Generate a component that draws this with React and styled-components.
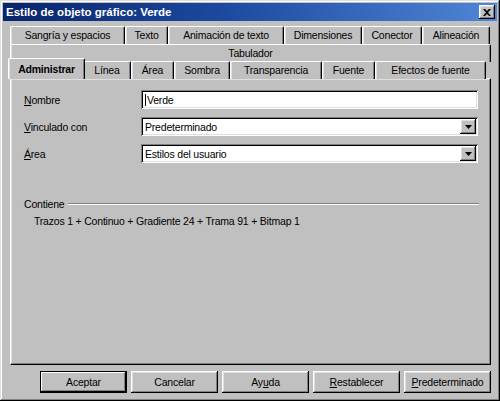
import styled, { createGlobalStyle } from 'styled-components';

const GlobalStyle = createGlobalStyle`
  html, body {
    margin: 0;
    padding: 0;
    background: #c0c0c0;
  }
  * {
    box-sizing: border-box;
  }
`;

const raised = `
  box-shadow: inset -1px -1px #000, inset 1px 1px #fff, inset -2px -2px #808080, inset 2px 2px #dfdfdf;
`;

const sunken = `
  box-shadow: inset 1px 1px #808080, inset -1px -1px #fff, inset 2px 2px #000, inset -2px -2px #dfdfdf;
`;

const topRow = [
  { label: 'Sangría y espacios', width: 115 },
  { label: 'Texto', width: 43 },
  { label: 'Animación de texto', width: 116 },
  { label: 'Dimensiones', width: 78 },
  { label: 'Conector', width: 60 },
  { label: 'Alineación', width: 68 },
];

const frontRow = [
  { label: 'Administrar', width: 77 },
  { label: 'Línea', width: 48 },
  { label: 'Área', width: 43 },
  { label: 'Sombra', width: 56 },
  { label: 'Transparencia', width: 92 },
  { label: 'Fuente', width: 53 },
  { label: 'Efectos de fuente', width: 111 },
];

const buttons = [
  { label: 'Aceptar', isDefault: true },
  { label: 'Cancelar' },
  { label: ['Ay', 'u', 'da'] },
  { label: ['', 'R', 'establecer'] },
  { label: ['', 'P', 'redeterminado'] },
];

const Window = styled.div`
  width: 500px;
  height: 401px;
  padding: 3px;
  display: flex;
  flex-direction: column;
  background: #c0c0c0;
  font-family: 'Liberation Sans', Arial, sans-serif;
  font-size: 10.5px;
  letter-spacing: -0.2px;
  color: #000;
  box-shadow: inset -1px -1px #000, inset 1px 1px #dfdfdf, inset -2px -2px #808080, inset 2px 2px #fff;
`;

const TitleBar = styled.div`
  height: 18px;
  display: flex;
  align-items: center;
  justify-content: space-between;
  padding: 0 2px 0 3px;
  background: linear-gradient(90deg, #08246b 0%, #1c4aa0 45%, #4f86d6 100%);
  color: #fff;
  font-weight: 700;
  font-size: 11.5px;
  letter-spacing: 0;
`;

const CloseButton = styled.div`
  width: 16px;
  height: 14px;
  display: flex;
  align-items: center;
  justify-content: center;
  background: #c0c0c0;
  ${raised}

  svg {
    display: block;
  }
`;

const Body = styled.div`
  flex: 1;
  display: flex;
  flex-direction: column;
  padding: 5px 6px 0 7px;
`;

const TabRow = styled.div`
  display: flex;
  height: ${({ $h }) => $h}px;
  position: relative;
  z-index: ${({ $z }) => $z};
`;

const Tab = styled.div`
  width: ${({ $w }) => ($w ? `${$w}px` : 'auto')};
  flex: ${({ $w }) => ($w ? '0 0 auto' : '1 1 auto')};
  height: ${({ $active }) => ($active ? 21 : 18)}px;
  margin: ${({ $active }) => ($active ? '-3px -2px 0 -2px' : '0')};
  display: flex;
  align-items: flex-start;
  justify-content: center;
  padding-top: ${({ $active }) => ($active ? 4 : 2)}px;
  background: #c0c0c0;
  border-top: 1px solid #fff;
  border-left: 1px solid #fff;
  border-right: 1px solid #000;
  border-radius: 2px 2px 0 0;
  box-shadow: inset -1px 0 #808080, inset 1px 0 #dfdfdf;
  font-weight: ${({ $active }) => ($active ? 700 : 400)};
  white-space: nowrap;
  position: relative;
  z-index: ${({ $active }) => ($active ? 3 : 1)};
`;

const Panel = styled.div`
  height: 287px;
  display: flex;
  flex-direction: column;
  padding: 11px 12px 0 12px;
  border-top: 1px solid #fff;
  border-left: 1px solid #fff;
  border-right: 1px solid #000;
  border-bottom: 1px solid #000;
  box-shadow: inset -1px -1px #808080, inset 1px 1px #dfdfdf;
  position: relative;
  z-index: 2;
`;

const FieldRow = styled.div`
  display: flex;
  align-items: center;
  height: 19px;
  margin-bottom: 8px;
`;

const Label = styled.div`
  width: 118px;
  padding-left: 1px;
`;

const Field = styled.div`
  flex: 1;
  height: 19px;
  display: flex;
  align-items: center;
  justify-content: space-between;
  padding: 2px 2px 2px 4px;
  background: #fff;
  ${sunken}
`;

const Caret = styled.span`
  display: inline-block;
  width: 1px;
  height: 12px;
  background: #000;
  margin-right: 1px;
  vertical-align: -2px;
`;

const DropButton = styled.div`
  width: 16px;
  height: 15px;
  display: flex;
  align-items: center;
  justify-content: center;
  background: #c0c0c0;
  ${raised}
`;

const Group = styled.div`
  margin-top: 27px;
  display: flex;
  align-items: center;
  gap: 4px;
  padding-left: 1px;
`;

const GroupLine = styled.div`
  flex: 1;
  height: 2px;
  border-top: 1px solid #808080;
  border-bottom: 1px solid #fff;
  margin-right: -1px;
`;

const Contents = styled.div`
  margin-top: 5px;
  padding-left: 11px;
`;

const ButtonBar = styled.div`
  display: flex;
  gap: 4px;
  padding: 6px 0 0 30px;
`;

const Button = styled.div`
  width: 87px;
  height: 22px;
  display: flex;
  align-items: center;
  justify-content: center;
  background: #c0c0c0;
  box-shadow: ${({ $default }) =>
    $default
      ? 'inset 0 0 0 1px #000, inset -2px -2px #000, inset 2px 2px #fff, inset -3px -3px #808080'
      : 'inset -1px -1px #000, inset 1px 1px #fff, inset -2px -2px #808080, inset 2px 2px #dfdfdf'};
`;

const Arrow = () => (
  <svg width="7" height="4" viewBox="0 0 7 4">
    <path d="M0 0h7L3.5 4z" fill="#000" />
  </svg>
);

export default function App() {
  return (
    <>
      <GlobalStyle />
      <Window>
        <TitleBar>
          <span>Estilo de objeto gráfico: Verde</span>
          <CloseButton>
            <svg width="8" height="7" viewBox="0 0 8 7">
              <path d="M0 0h2l2 2 2-2h2L5 3.5 8 7H6L4 5 2 7H0l3-3.5z" fill="#000" />
            </svg>
          </CloseButton>
        </TitleBar>
        <Body>
          <TabRow $h={18} $z={1}>
            {topRow.map((t) => (
              <Tab key={t.label} $w={t.width}>{t.label}</Tab>
            ))}
          </TabRow>
          <TabRow $h={17} $z={2}>
            <Tab>Tabulador</Tab>
          </TabRow>
          <TabRow $h={17} $z={3}>
            {frontRow.map((t, i) => (
              <Tab key={t.label} $w={t.width} $active={i === 0}>{t.label}</Tab>
            ))}
          </TabRow>
          <Panel>
            <FieldRow>
              <Label><u>N</u>ombre</Label>
              <Field><span><Caret />Verde</span></Field>
            </FieldRow>
            <FieldRow>
              <Label><u>V</u>inculado con</Label>
              <Field>
                <span>Predeterminado</span>
                <DropButton><Arrow /></DropButton>
              </Field>
            </FieldRow>
            <FieldRow>
              <Label><u>Á</u>rea</Label>
              <Field>
                <span>Estilos del usuario</span>
                <DropButton><Arrow /></DropButton>
              </Field>
            </FieldRow>
            <Group>
              <span>Contiene</span>
              <GroupLine />
            </Group>
            <Contents>Trazos 1 + Continuo + Gradiente 24 + Trama 91 + Bitmap 1</Contents>
          </Panel>
          <ButtonBar>
            {buttons.map((b, i) => (
              <Button key={i} $default={b.isDefault}>
                {Array.isArray(b.label) ? (
                  <span>{b.label[0]}<u>{b.label[1]}</u>{b.label[2]}</span>
                ) : (
                  b.label
                )}
              </Button>
            ))}
          </ButtonBar>
        </Body>
      </Window>
    </>
  );
}
